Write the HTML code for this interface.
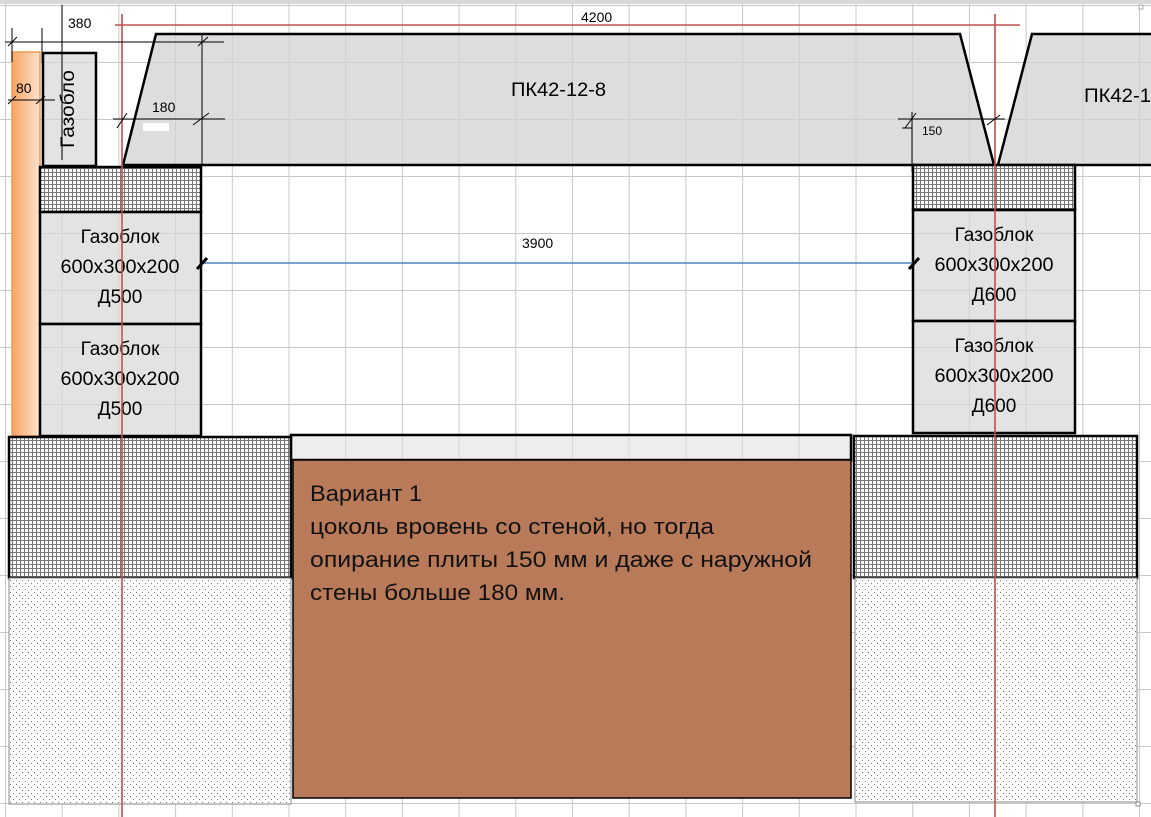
<!DOCTYPE html>
<html><head><meta charset="utf-8"><style>
html,body{margin:0;padding:0;background:#fff;width:1151px;height:817px;overflow:hidden}
svg{display:block;font-family:"Liberation Sans","DejaVu Sans",sans-serif}
</style></head><body>
<svg width="1151" height="817" viewBox="0 0 1151 817" xmlns="http://www.w3.org/2000/svg">
<defs>
<pattern id="grid" x="5" y="5" width="56.7" height="57" patternUnits="userSpaceOnUse">
<path d="M0.5 0V57M0 0.5H56.7" stroke="#c8c8c8" stroke-width="1" fill="none"/>
</pattern>
<pattern id="hatch" width="4" height="4" patternUnits="userSpaceOnUse">
<rect width="4" height="4" fill="#fff"/>
<path d="M0 0.5H4M0.5 0V4" stroke="#777" stroke-width="1"/>
</pattern>
<pattern id="dots" width="6" height="6" patternUnits="userSpaceOnUse">
<rect width="6" height="6" fill="#fff"/>
<rect x="1" y="1" width="1" height="1" fill="#777"/>
<rect x="4" y="4" width="1" height="1" fill="#777"/>
</pattern>
<linearGradient id="org" x1="0" x2="1">
<stop offset="0" stop-color="#f6a561"/><stop offset="1" stop-color="#fde3cf"/>
</linearGradient>
</defs>
<rect width="1151" height="817" fill="url(#grid)"/>
<rect x="0" y="0" width="1151" height="4" fill="#d8d8d8"/>

<rect x="12" y="52" width="28" height="384" fill="url(#org)" stroke="#f19a4e" stroke-width="1.5"/>
<rect x="43" y="53" width="53" height="113" fill="rgba(215,215,215,0.7)" stroke="#000" stroke-width="2.5"/>
<text transform="translate(74,148) rotate(-90)" font-size="19" textLength="78" lengthAdjust="spacingAndGlyphs" fill="#000">Газобло</text>

<polygon points="123,165 156,34 960,34 993,165" fill="rgba(210,210,210,0.75)"/>
<polyline points="123,165 156,34 960,34 994,165" fill="none" stroke="#000" stroke-width="2.5"/>
<polygon points="1000,165 1032,34 1151,34 1151,165" fill="rgba(210,210,210,0.75)"/>
<polyline points="998,165 1032,34 1151,34" fill="none" stroke="#000" stroke-width="2.5"/>
<line x1="123" y1="165" x2="1151" y2="165" stroke="#000" stroke-width="2.5"/>
<text x="511" y="96" font-size="19" textLength="95" lengthAdjust="spacingAndGlyphs">ПК42-12-8</text>
<text x="1084" y="102" font-size="19" textLength="67" lengthAdjust="spacingAndGlyphs">ПК42-1</text>
<rect x="143" y="123" width="26" height="8" fill="#fff"/>

<rect x="40" y="167" width="161" height="45" fill="url(#hatch)" stroke="#000" stroke-width="2.5"/>
<rect x="40" y="212" width="161" height="112" fill="rgba(215,215,215,0.7)" stroke="#000" stroke-width="2.5"/>
<rect x="40" y="324" width="161" height="112" fill="rgba(215,215,215,0.7)" stroke="#000" stroke-width="2.5"/>
<rect x="913" y="165" width="162" height="45" fill="url(#hatch)" stroke="#000" stroke-width="2.5"/>
<rect x="913" y="210" width="162" height="111" fill="rgba(215,215,215,0.7)" stroke="#000" stroke-width="2.5"/>
<rect x="913" y="321" width="162" height="112" fill="rgba(215,215,215,0.7)" stroke="#000" stroke-width="2.5"/>
<g font-size="19" text-anchor="middle" fill="#000">
<text x="120" y="243">Газоблок</text><text x="120" y="273" textLength="119" lengthAdjust="spacingAndGlyphs">600x300x200</text><text x="120" y="303">Д500</text>
<text x="120" y="355">Газоблок</text><text x="120" y="385" textLength="119" lengthAdjust="spacingAndGlyphs">600x300x200</text><text x="120" y="415">Д500</text>
<text x="994" y="241">Газоблок</text><text x="994" y="271" textLength="119" lengthAdjust="spacingAndGlyphs">600x300x200</text><text x="994" y="301">Д600</text>
<text x="994" y="352">Газоблок</text><text x="994" y="382" textLength="119" lengthAdjust="spacingAndGlyphs">600x300x200</text><text x="994" y="412">Д600</text>
</g>

<rect x="9" y="437" width="282" height="141" fill="url(#hatch)" stroke="#000" stroke-width="2.5"/>
<rect x="9" y="578" width="282" height="226" fill="url(#dots)" stroke="#888" stroke-width="1"/>
<rect x="854" y="436" width="283" height="142" fill="url(#hatch)" stroke="#000" stroke-width="2.5"/>
<rect x="855" y="578" width="282" height="224" fill="url(#dots)" stroke="#888" stroke-width="1"/>
<rect x="291" y="435" width="560" height="25" fill="rgba(225,225,225,0.6)" stroke="#000" stroke-width="2.5"/>
<rect x="293" y="460" width="558" height="338" fill="#b87a58" stroke="#000" stroke-width="1.5"/>
<g font-size="22" fill="#111" lengthAdjust="spacingAndGlyphs">
<text x="310" y="501" textLength="112" lengthAdjust="spacingAndGlyphs">Вариант 1</text>
<text x="310" y="534" textLength="404" lengthAdjust="spacingAndGlyphs">цоколь вровень со стеной, но тогда</text>
<text x="310" y="567" textLength="502" lengthAdjust="spacingAndGlyphs">опирание плиты 150 мм и даже с наружной</text>
<text x="310" y="600" textLength="255" lengthAdjust="spacingAndGlyphs">стены больше 180 мм.</text>
</g>

<g stroke="#c0504d" stroke-width="1.6">
<line x1="122" y1="14" x2="122" y2="817"/>
<line x1="995" y1="14" x2="995" y2="817"/>
<line x1="115" y1="25" x2="1020" y2="25"/>
</g>
<line x1="201" y1="263" x2="915" y2="263" stroke="#4f81bd" stroke-width="1.5"/>
<g stroke="#000" stroke-width="3"><line x1="197" y1="269" x2="207" y2="258"/><line x1="909" y1="269" x2="919" y2="258"/></g>

<g stroke="#000" stroke-width="1" fill="none">
<line x1="5" y1="42" x2="224" y2="42"/>
<line x1="12" y1="28" x2="12" y2="62"/><line x1="42" y1="28" x2="42" y2="62"/>
<line x1="62" y1="5" x2="62" y2="160"/>
<line x1="8" y1="46" x2="17" y2="37"/><line x1="198" y1="46" x2="208" y2="37"/>
<line x1="202" y1="34" x2="202" y2="165"/>
<line x1="8" y1="100" x2="55" y2="100"/>
<line x1="8" y1="104" x2="16" y2="96"/><line x1="36" y1="104" x2="45" y2="96"/>
<line x1="113" y1="119" x2="225" y2="119"/>
<line x1="117" y1="128" x2="127" y2="113"/><line x1="193" y1="125" x2="209" y2="113"/>
<line x1="898" y1="119" x2="1005" y2="119"/>
<line x1="912" y1="112" x2="912" y2="172"/>
<line x1="905" y1="128" x2="916" y2="113"/><line x1="987" y1="125" x2="1000" y2="115"/>
<polyline points="902,128 912,128 912,120"/>
</g>
<g font-size="14" fill="#000">
<text x="68" y="28">380</text>
<text x="16" y="93">80</text>
<text x="152" y="112">180</text>
<text x="922" y="135" font-size="12">150</text>
<text x="581" y="22">4200</text>
<text x="522" y="248">3900</text>
</g>
<rect x="1136" y="802" width="4" height="4" fill="#fff" stroke="#888" stroke-width="1"/>
<rect x="1139" y="5" width="4" height="4" fill="#fff" stroke="#aaa" stroke-width="1"/>
</svg>
</body></html>
